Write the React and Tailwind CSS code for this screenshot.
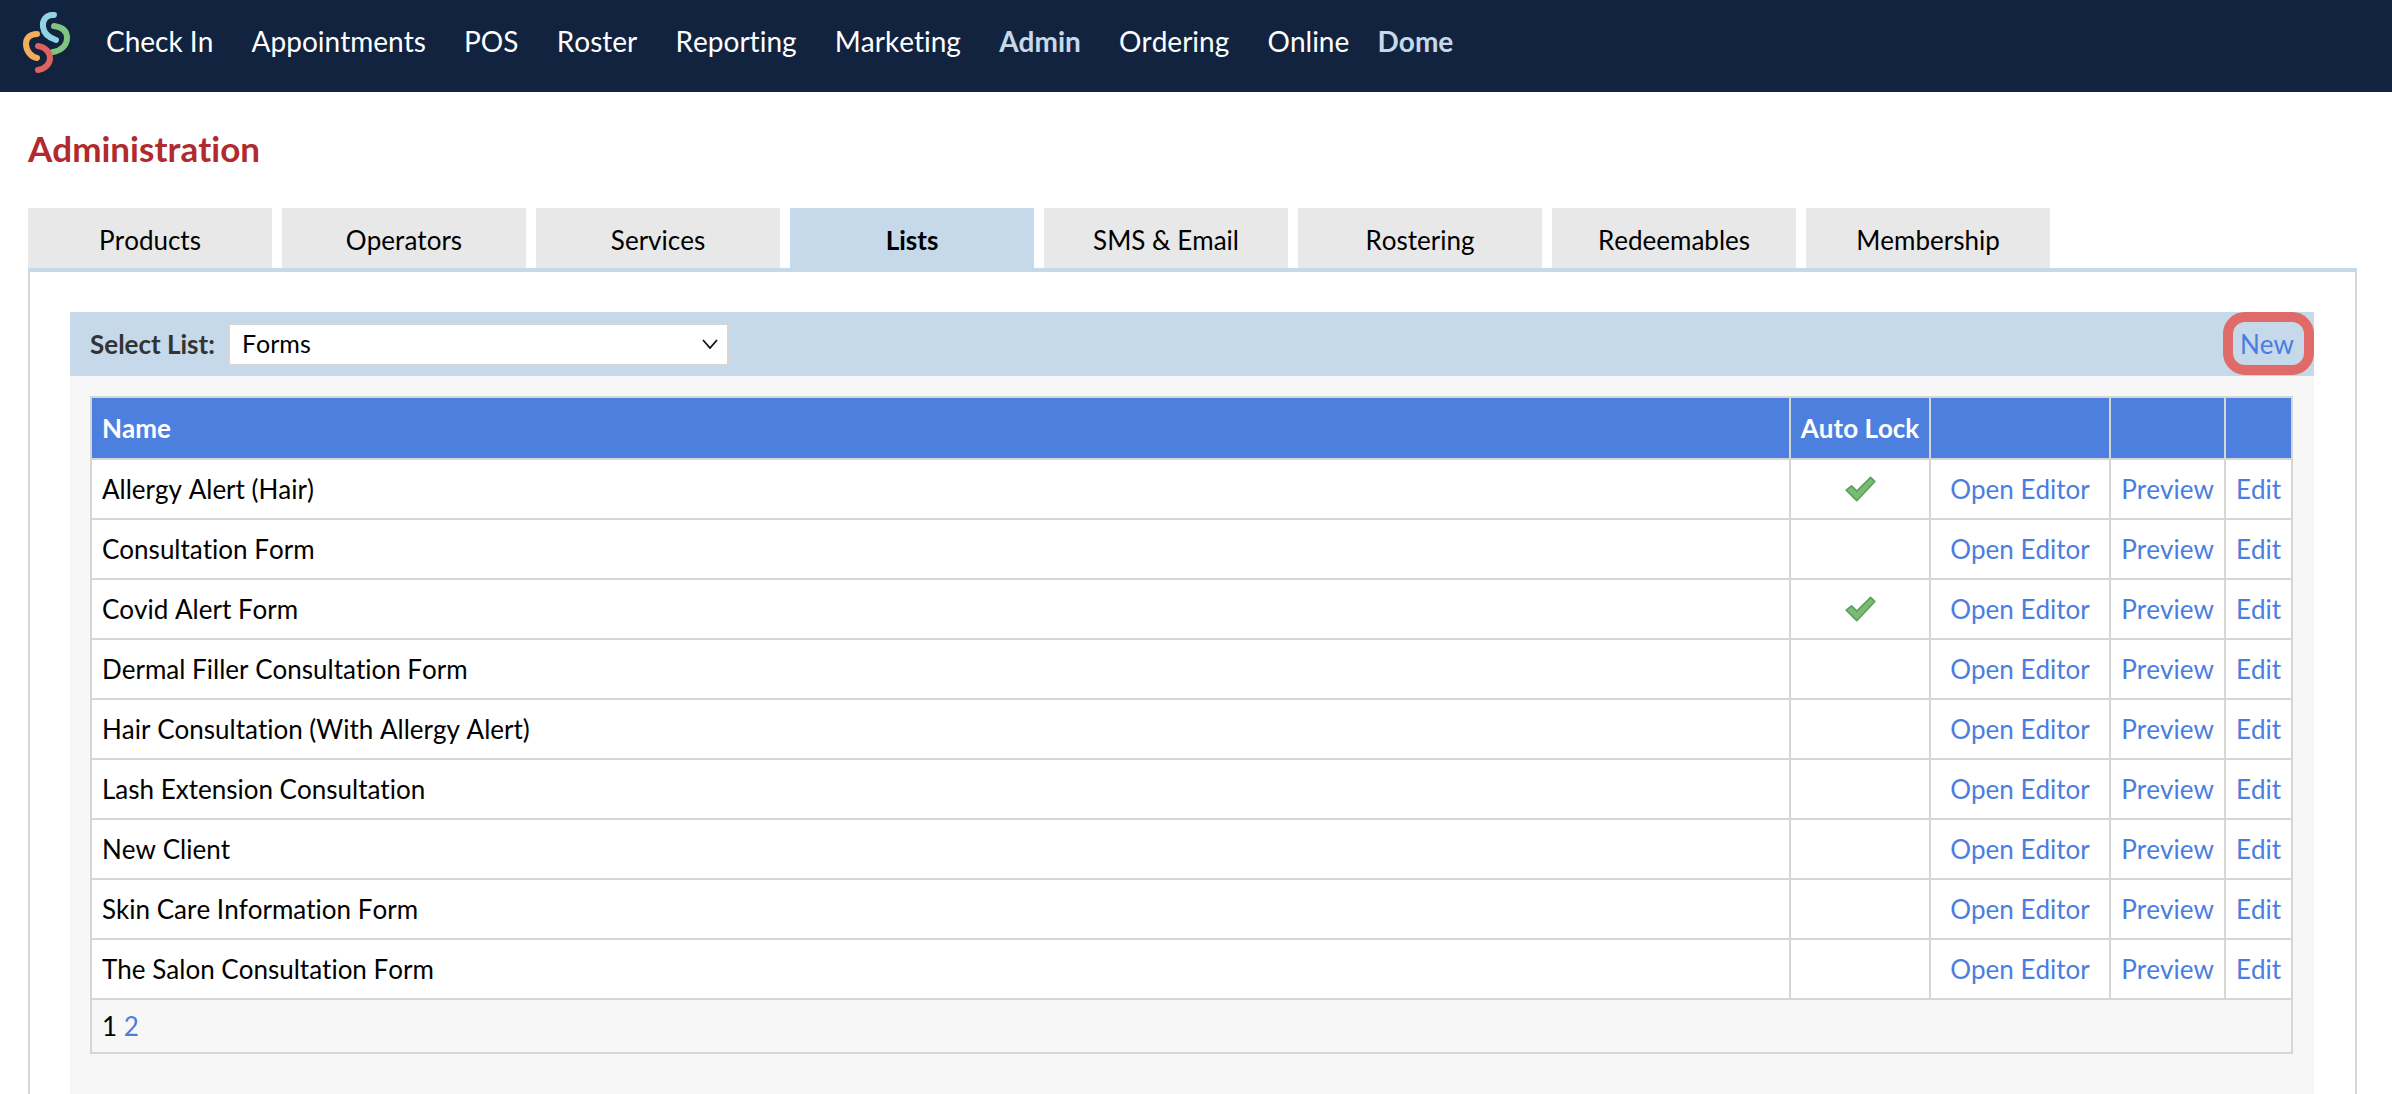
import React from 'react';

const NAV = [
  { label: 'Check In' },
  { label: 'Appointments' },
  { label: 'POS' },
  { label: 'Roster' },
  { label: 'Reporting' },
  { label: 'Marketing' },
  { label: 'Admin', active: true },
  { label: 'Ordering' },
  { label: 'Online' },
];

const TABS = ['Products', 'Operators', 'Services', 'Lists', 'SMS & Email', 'Rostering', 'Redeemables', 'Membership'];

const FORMS = [
  { name: 'Allergy Alert (Hair)', locked: true },
  { name: 'Consultation Form' },
  { name: 'Covid Alert Form', locked: true },
  { name: 'Dermal Filler Consultation Form' },
  { name: 'Hair Consultation (With Allergy Alert)' },
  { name: 'Lash Extension Consultation' },
  { name: 'New Client' },
  { name: 'Skin Care Information Form' },
  { name: 'The Salon Consultation Form' },
];

const Logo = () => (
  <svg width="80" height="80" viewBox="0 0 80 80" fill="none" strokeLinecap="round" strokeWidth="6">
    <path d="M44 15C36 14 32 21 33 27C34 34 40 38 46 40" stroke="#8fd3e4" />
    <path d="M44 26C52 27 57 31 57 38C57 46 50 51 43 52" stroke="#7fc47f" />
    <path d="M27 34C20 34 16 38 16 44C16 52 22 57 27 58" stroke="#f3ae5b" />
    <path d="M28 46C35 47 40 52 40 58C40 64 35 69 28 70" stroke="#e0625f" />
  </svg>
);

const Check = () => (
  <svg width="34" height="28" viewBox="0 0 32 26" fill="none" className="mx-auto block">
    <path d="M3 14L8 10L13 15L26 2L30 6L13 24Z" fill="#7abb76" stroke="#5c9f5a" strokeWidth="1.5" strokeLinejoin="round" />
  </svg>
);

const cell = 'border-2 border-[#d6d6d6] px-[10px] h-[60px]';
const link = 'text-[#4a7ddf]';

export default function App() {
  return (
    <div className="h-[1094px] overflow-hidden bg-white text-[26px] text-black [font-variant-ligatures:none] [font-kerning:none] font-['Lato','Liberation_Sans',sans-serif]">
      <header className="flex h-[92px] items-center bg-[#12233f] pl-[10px] text-[28px] text-white">
        <div className="mr-[16px] -mt-[12px]"><Logo /></div>
        <nav className="flex items-center gap-[38.25px] -mt-[10px]">
          {NAV.map((item) => (
            <a key={item.label} className={item.active ? 'font-bold text-[#c5d9ea]' : ''}>{item.label}</a>
          ))}
          <a className="-ml-[10px] font-bold text-[#c5d9ea]">Dome</a>
        </nav>
      </header>

      <main className="ml-[28px] mr-[35px]">
        <h1 className="flex h-[116px] items-center pb-[4px] text-[35px] font-bold text-[#b02a2e]">Administration</h1>

        <div className="flex gap-[10px] border-b-4 border-[#c5d9ea]">
          {TABS.map((tab) => (
            <a
              key={tab}
              className={
                tab === 'Lists'
                  ? 'flex h-[64px] w-[244px] items-center justify-center bg-[#c5d9ea] font-bold -mb-[4px]'
                  : 'flex h-[60px] w-[244px] items-center justify-center bg-[#e8e8e8] pt-[4px]'
              }
            >
              {tab}
            </a>
          ))}
        </div>

        <section className="h-[900px] border-x-2 border-[#d6d6d6] pl-[40px] pr-[41px] pt-[40px]">
          <div className="h-full bg-[#f7f7f7]">
            <div className="flex h-[64px] items-center bg-[#c5d9ea] pl-[20px] pr-[20px]">
              <label className="font-bold text-[#333333]">Select List:</label>
              <div className="relative ml-[13px] h-[43px] w-[501px]">
                <select className="h-full w-full appearance-none border-2 border-[#d6d6d6] bg-white pl-[12px] text-[25px] text-black">
                  <option>Forms</option>
                </select>
                <svg width="16" height="10" viewBox="0 0 16 10" fill="none" className="absolute right-[11px] top-[16px]">
                  <path d="M1 1L8 9L15 1" stroke="#111111" strokeWidth="1.8" />
                </svg>
              </div>
              <a className={`relative ml-auto ${link}`}>
                New
                <span className="absolute -left-[17px] -right-[20px] -top-[13px] -bottom-[11px] rounded-[22px] border-[10px] border-[#e06a68]" />
              </a>
            </div>

            <div className="pl-[20px] pr-[21px] pt-[20px]">
              <table className="w-full table-fixed border-collapse">
                <colgroup>
                  <col />
                  <col className="w-[140px]" />
                  <col className="w-[180px]" />
                  <col className="w-[115px]" />
                  <col className="w-[67px]" />
                </colgroup>
                <thead>
                  <tr className="bg-[#4d7fdf] font-bold text-white">
                    <th className={`${cell} !h-[62px] text-left font-bold`}>Name</th>
                    <th className={`${cell} whitespace-nowrap !px-0 text-center font-bold`}>Auto Lock</th>
                    <th className={cell} />
                    <th className={cell} />
                    <th className={cell} />
                  </tr>
                </thead>
                <tbody className="bg-white">
                  {FORMS.map((form) => (
                    <tr key={form.name}>
                      <td className={cell}>{form.name}</td>
                      <td className={cell}>{form.locked && <Check />}</td>
                      <td className={`${cell} text-center ${link}`}>Open Editor</td>
                      <td className={`${cell} !px-0 text-center ${link}`}>Preview</td>
                      <td className={`${cell} !px-0 text-center ${link}`}>Edit</td>
                    </tr>
                  ))}
                </tbody>
                <tfoot>
                  <tr className="bg-[#f7f7f7]">
                    <td colSpan={5} className="h-[54px] border-2 border-[#d6d6d6] px-[10px]">
                      1 <a className={link}>2</a>
                    </td>
                  </tr>
                </tfoot>
              </table>
            </div>
          </div>
        </section>
      </main>
    </div>
  );
}
